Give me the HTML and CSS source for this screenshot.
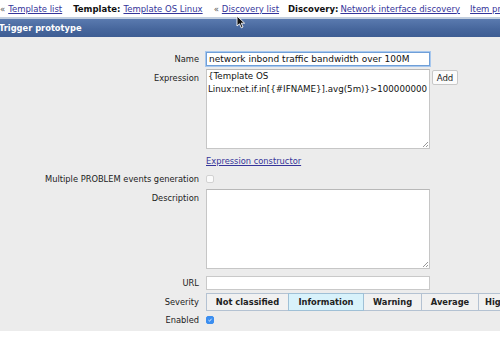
FILE: index.html
```html
<!DOCTYPE html>
<html>
<head>
<meta charset="utf-8">
<link rel="stylesheet" href="styles.css">
</head>
<body>
<div class="nav">
  <span class="sep">«</span><a href="#" class="l1">Template list</a>
  <b class="k1">Template:</b><a href="#" class="l2">Template OS Linux</a>
  <span class="sep s2">«</span><a href="#" class="l3">Discovery list</a>
  <b class="k2">Discovery:</b><a href="#" class="l4">Network interface discovery</a>
  <a href="#" class="l5">Item prototypes</a>
</div>
<div class="bar"><span>Trigger prototype</span></div>
<div class="form">
  <div class="row r-name">
    <label class="lbl">Name</label>
    <div class="input focus">network inbond traffic bandwidth over 100M</div>
  </div>
  <div class="row r-expr">
    <label class="lbl lbl-top">Expression</label>
    <div class="textarea expr">{Template OS<br>Linux:net.if.in[{#IFNAME}].avg(5m)}&gt;100000000<span class="grip"></span></div>
    <button class="btn-add">Add</button>
  </div>
  <div class="row r-link">
    <span class="lbl"></span>
    <a href="#" class="ctor">Expression constructor</a>
  </div>
  <div class="row r-multi">
    <label class="lbl">Multiple PROBLEM events generation</label>
    <span class="cb"></span>
  </div>
  <div class="row r-desc">
    <label class="lbl lbl-top2">Description</label>
    <div class="textarea desc"><span class="grip"></span></div>
  </div>
  <div class="row r-url">
    <label class="lbl">URL</label>
    <div class="input"></div>
  </div>
  <div class="row r-sev">
    <label class="lbl">Severity</label>
    <div class="sev">
      <span class="sb w1">Not classified</span><span class="sb w2 on">Information</span><span class="sb w3">Warning</span><span class="sb w4">Average</span><span class="sb w5">High</span>
    </div>
  </div>
  <div class="row r-en">
    <label class="lbl">Enabled</label>
    <span class="cb checked"><svg width="9" height="9" viewBox="0 0 9 9"><path d="M2.2 4.7 L3.8 6.3 L6.9 2.6" fill="none" stroke="#fff" stroke-width="1.2"/></svg></span>
  </div>
</div>
<svg class="cursor" width="10" height="14" viewBox="0 0 10 14"><path d="M1 1 L1 11 L3.5 8.8 L5.3 12.8 L7 12 L5.3 8.2 L8.6 8.2 Z" fill="#111" stroke="#fff" stroke-width="0.9"/></svg>
</body>
</html>
```
FILE: styles.css
```css
html, body {
  margin: 0;
  padding: 0;
  background: #ffffff;
  font-family: "DejaVu Sans", Verdana, sans-serif;
  font-size: 8.3px;
  color: #111;
  width: 500px;
  height: 337px;
  overflow: hidden;
  position: relative;
}
a { color: #35359a; text-decoration: underline; }

.nav {
  height: 17px;
  display: flex;
  align-items: center;
  white-space: nowrap;
  overflow: hidden;
  padding-left: 0;
  font-size: 8.5px;
}
.nav .sep { color: #555; margin-right: 3px; }
.nav .l1 { margin-right: 11px; }
.nav .k1 { margin-right: 3px; color: #111; }
.nav .s2 { margin-left: 11px; }
.nav .l3 { margin-right: 9px; }
.nav .k2 { margin-right: 2px; color: #111; }
.nav .l5 { margin-left: 10px; }

.bar {
  height: 18px;
  border-top: 2px solid #c3cfdf;
  background: linear-gradient(#5a7aaf, #47679d 55%, #3e5d93);
  color: #fff;
  font-weight: bold;
  font-size: 8.3px;
  display: flex;
  align-items: center;
}
.bar span { margin-left: -1px; }

.form {
  background: #ececec;
  height: 294px;
  padding-top: 15px;
  box-sizing: border-box;
}
.row { display: flex; align-items: center; }
.lbl {
  width: 199px;
  text-align: right;
  margin-right: 7px;
  color: #222;
  flex: none;
}
.lbl-top { align-self: flex-start; padding-top: 4px; }
.lbl-top2 { align-self: flex-start; padding-top: 4px; }

.input {
  width: 224px;
  height: 14px;
  box-sizing: border-box;
  background: #fff;
  border: 1px solid #c9c9c9;
  padding-left: 2px;
  line-height: 12px;
  font-size: 9px;
  white-space: nowrap;
  overflow: hidden;
}
.input.focus {
  border: 1px solid #6f9fd8;
  box-shadow: 0 0 0 1px #a8c8ee;
}
.textarea {
  position: relative;
  width: 224px;
  height: 80px;
  box-sizing: border-box;
  background: #fff;
  border: 1px solid #c6c6c6;
  border-top-color: #b8b8b8;
  padding: 0 1px;
  font-size: 8.7px;
  line-height: 13px;
}
.grip {
  position: absolute;
  right: 1px;
  bottom: 1px;
  width: 5px;
  height: 5px;
  background: linear-gradient(135deg, transparent 45%, #999 46%, #999 55%, transparent 56%, transparent 70%, #999 71%, #999 80%, transparent 81%);
}
.btn-add {
  align-self: flex-start;
  margin-left: 2px;
  margin-top: 1px;
  width: 26px;
  height: 15px;
  padding: 0;
  font-family: "DejaVu Sans", Verdana, sans-serif;
  font-size: 8.6px;
  color: #222;
  background: #fbfbfb;
  border: 1px solid #c8c8c8;
  border-radius: 2px;
}

.r-expr { margin-top: 3px; }
.r-link { margin-top: 6px; height: 12px; }
.r-multi { margin-top: 6px; height: 12px; }
.cb {
  width: 8px;
  height: 8px;
  box-sizing: border-box;
  border: 1px solid #d2d2d2;
  border-radius: 2px;
  background: #fbfbfb;
  display: flex;
  align-items: center;
  justify-content: center;
}
.cb.checked { background: #3b8ef0; border-color: #3b8ef0; }
.cb svg { width: 8px; height: 8px; }
.r-desc { margin-top: 4px; }
.r-url { margin-top: 7px; }
.r-sev { margin-top: 3px; }
.sev { display: flex; height: 18px; }
.sb {
  box-sizing: border-box;
  height: 18px;
  display: flex;
  align-items: center;
  justify-content: center;
  font-weight: bold;
  color: #222;
  background: #f1f1f1;
  border: 1px solid #b4c2d2;
  margin-right: -1px;
  white-space: nowrap;
  flex: none;
}
.sb.on { background: #d8f2fb; border-color: #9fc0d6; position: relative; }
.w1 { width: 83px; }
.w2 { width: 76px; }
.w3 { width: 59px; }
.w4 { width: 58px; }
.w5 { width: 40px; justify-content: flex-start; padding-left: 6px; }
.r-en { margin-top: 2px; height: 14px; }

.cursor { position: absolute; left: 236px; top: 15px; }
```
